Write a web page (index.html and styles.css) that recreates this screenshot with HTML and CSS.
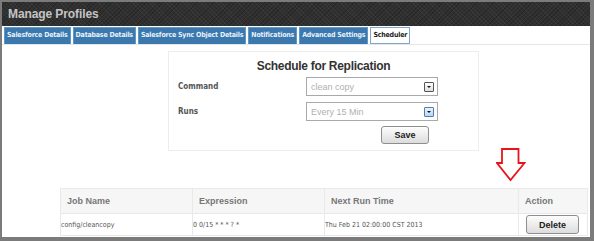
FILE: index.html
```html
<!DOCTYPE html>
<html lang="en">
<head>
    <meta charset="UTF-8">
    <title>Manage Profiles</title>
    <link rel="stylesheet" href="styles.css">
</head>
<body>
    <div class="window">
        <div class="header">Manage Profiles</div>
        <ul class="tabs">
            <li>Salesforce Details</li>
            <li>Database Details</li>
            <li>Salesforce Sync Object Details</li>
            <li>Notifications</li>
            <li>Advanced Settings</li>
            <li class="active">Scheduler</li>
        </ul>
        <div class="content">
            <form class="panel" autocomplete="off">
                <h2>Schedule for Replication</h2>
                <div class="row">
                    <label>Command</label>
                    <div class="select"><span>clean copy</span><i class="drop"></i></div>
                </div>
                <div class="row">
                    <label>Runs</label>
                    <div class="select"><span>Every 15 Min</span><i class="drop focus"></i></div>
                </div>
                <div class="actions">
                    <button type="button" class="btn save">Save</button>
                </div>
            </form>

            <svg class="arrow" width="30" height="34" viewBox="0 0 30 34">
                <path d="M6 1 H22.5 V15 H28.5 L14.5 32 L1 15 H6 Z" fill="none" stroke="#e8141b" stroke-width="1.8"/>
            </svg>

            <table class="jobs">
                <thead>
                    <tr>
                        <th class="c-name">Job Name</th>
                        <th class="c-expr">Expression</th>
                        <th class="c-next">Next Run Time</th>
                        <th class="c-act">Action</th>
                    </tr>
                </thead>
                <tbody>
                    <tr>
                        <td>config/cleancopy</td>
                        <td>0 0/15 * * * ? *</td>
                        <td>Thu Feb 21 02:00:00 CST 2013</td>
                        <td class="c-act"><button type="button" class="btn del">Delete</button></td>
                    </tr>
                </tbody>
            </table>
        </div>
    </div>
</body>
</html>
```

FILE: styles.css
```css
body {
    margin: 0;
    background: #fff;
    font-family: "Liberation Sans", Arial, sans-serif;
}

.window {
    position: relative;
    box-sizing: border-box;
    width: 594px;
    height: 241px;
    border-style: solid;
    border-color: #7b7b7b;
    border-width: 2px 4px 4px 2px;
    overflow: hidden;
}

.header {
    height: 24px;
    line-height: 25px;
    padding-left: 6px;
    background-color: #303030;
    background-image:
        repeating-linear-gradient(45deg, rgba(255,255,255,.04) 0 1px, transparent 1px 3px),
        repeating-linear-gradient(-45deg, rgba(0,0,0,.18) 0 1px, transparent 1px 3px);
    color: #c4c4c4;
    font-size: 12px;
    font-weight: bold;
    letter-spacing: -.1px;
}

.tabs {
    list-style: none;
    display: flex;
    gap: 2px;
    margin: 1px 0 0;
    padding: 0 0 0 2px;
    height: 17px;
    border-bottom: 1px solid #e6e6e6;
}

    .tabs li {
        box-sizing: border-box;
        height: 17px;
        line-height: 15px;
        padding: 0 2px;
        background: #3a78ae;
        border: 1px solid #5f97c6;
        border-bottom: none;
        color: #e9f1f8;
        font-family: "DejaVu Sans Condensed", "DejaVu Sans", sans-serif;
        font-stretch: condensed;
        font-size: 7px;
        letter-spacing: -.2px;
        font-weight: bold;
        white-space: nowrap;
    }

    .tabs li.active {
        background: #fff;
        border: 1px solid #7fa7cb;
        color: #1b1b1b;
    }

.content {
    position: relative;
}

.panel {
    box-sizing: border-box;
    width: 311px;
    height: 100px;
    margin: 6px 0 0 166px;
    padding: 6px 9px 0;
    border: 1px solid #ededed;
}

    .panel h2 {
        margin: 0 0 3px;
        text-align: center;
        font-size: 12px;
        letter-spacing: -.3px;
        line-height: 16px;
        color: #333;
    }

.row {
    display: flex;
    align-items: center;
    margin-bottom: 6px;
}

    .row label {
        width: 128px;
        font-family: "DejaVu Sans Condensed", "DejaVu Sans", sans-serif;
        font-stretch: condensed;
        font-size: 8px;
        font-weight: bold;
        color: #555;
    }

.select {
    box-sizing: border-box;
    display: flex;
    align-items: center;
    justify-content: space-between;
    width: 132px;
    height: 19px;
    padding: 0 3px 0 4px;
    border: 1px solid #a9a9a9;
    background: #fff;
    font-size: 9px;
    color: #b0b0b0;
}

.drop {
    box-sizing: border-box;
    width: 10px;
    height: 10px;
    border: 1px solid #555;
    border-radius: 1px;
    background: linear-gradient(#fff, #ddd);
    position: relative;
}

    .drop::after {
        content: "";
        position: absolute;
        left: 2px;
        top: 3px;
        border: 2px solid transparent;
        border-top: 2px solid #111;
    }

    .drop.focus {
        background: linear-gradient(#e8f2fc, #b9d6f2);
        border-color: #4d7fb0;
    }

.actions {
    display: flex;
    justify-content: flex-end;
    padding-right: 40px;
    margin-top: -1px;
}

.btn {
    box-sizing: border-box;
    border: 1px solid #8e8e8e;
    border-radius: 3px;
    background: linear-gradient(#fdfdfd, #dcdcdc);
    font-family: "Liberation Sans", Arial, sans-serif;
    font-size: 9px;
    font-weight: bold;
    color: #222;
    padding: 0;
}

.save {
    width: 48px;
    height: 18px;
}

.arrow {
    position: absolute;
    left: 494px;
    top: 97px;
}

.jobs {
    margin: 37px 0 0 58px;
    width: 528px;
    border-collapse: collapse;
}

    .jobs th,
    .jobs td {
        border: 1px solid #e9e9e9;
        text-align: left;
        padding: 0;
    }

    .jobs th {
        height: 24px;
        padding-left: 6px;
        background: #f6f6f6;
        font-size: 9px;
        font-weight: bold;
        color: #777;
    }

    .jobs td {
        height: 21px;
        font-family: "DejaVu Sans Condensed", "DejaVu Sans", sans-serif;
        font-stretch: condensed;
        font-size: 7px;
        color: #555;
    }

.c-name { width: 125px; }
.c-expr { width: 125px; }
.c-next { width: 187px; }

.jobs td.c-act {
    text-align: right;
    padding-right: 8px;
}

.del {
    width: 53px;
    height: 19px;
    vertical-align: middle;
}
```
